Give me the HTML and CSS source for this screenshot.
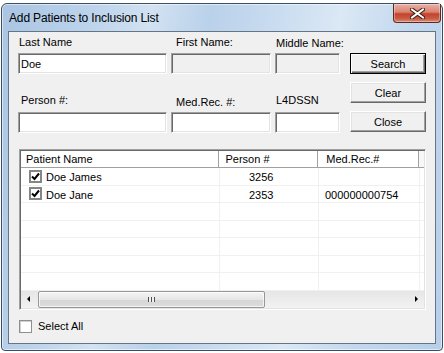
FILE: index.html
```html
<!DOCTYPE html>
<html lang="en">
<head>
    <meta charset="utf-8" />
    <title>Add Patients to Inclusion List</title>
    <link rel="stylesheet" href="styles.css">
</head>
<body>

    <div class="window">
        <div class="titlebar">
            <span class="title">Add Patients to Inclusion List</span>
            <div class="close-btn">
                <svg width="15" height="11" viewBox="0 0 15 11">
                    <path d="M2 1.5 L13 9.5 M13 1.5 L2 9.5" stroke="#3a1a14" stroke-width="4" stroke-linecap="square" />
                    <path d="M2 1.5 L13 9.5 M13 1.5 L2 9.5" stroke="#fff" stroke-width="2" stroke-linecap="square" />
                </svg>
            </div>
        </div>

        <div class="client">
            <div class="top">
                <div class="fields">
                    <label class="lbl">Last Name</label>
                    <label class="lbl lbl-pad">First Name:</label>
                    <label class="lbl lbl-mid">Middle Name:</label>

                    <input class="txt" type="text" value="Doe">
                    <input class="txt" type="text" disabled>
                    <input class="txt" type="text" disabled>

                    <label class="lbl lbl-row2 lbl-person">Person #:</label>
                    <label class="lbl lbl-row2 lbl-pad lbl-low">Med.Rec. #:</label>
                    <label class="lbl lbl-row2 lbl-mid">L4DSSN</label>

                    <input class="txt" type="text">
                    <input class="txt" type="text">
                    <input class="txt" type="text">
                </div>

                <div class="buttons">
                    <button class="btn default">Search</button>
                    <button class="btn">Clear</button>
                    <button class="btn">Close</button>
                </div>
            </div>

            <div class="listview">
                <div class="lv-header">
                    <div class="hcell col-name">Patient Name</div>
                    <div class="hcell col-person">Person #</div>
                    <div class="hcell col-med">Med.Rec.#</div>
                    <div class="hcell col-rest"></div>
                </div>

                <div class="lv-body">
                    <div class="row">
                        <div class="cell col-name"><span class="lv-check"><svg width="9" height="9" viewBox="0 0 9 9"><path d="M1 4.5 L3.5 7 L8 1.5" fill="none" stroke="#000" stroke-width="2" /></svg></span>Doe James</div>
                        <div class="cell col-person num">3256</div>
                        <div class="cell col-med"></div>
                        <div class="cell col-rest"></div>
                    </div>
                    <div class="row">
                        <div class="cell col-name"><span class="lv-check"><svg width="9" height="9" viewBox="0 0 9 9"><path d="M1 4.5 L3.5 7 L8 1.5" fill="none" stroke="#000" stroke-width="2" /></svg></span>Doe Jane</div>
                        <div class="cell col-person num">2353</div>
                        <div class="cell col-med">000000000754</div>
                        <div class="cell col-rest"></div>
                    </div>
                    <div class="row"><div class="cell col-name"></div><div class="cell col-person"></div><div class="cell col-med"></div><div class="cell col-rest"></div></div>
                    <div class="row"><div class="cell col-name"></div><div class="cell col-person"></div><div class="cell col-med"></div><div class="cell col-rest"></div></div>
                    <div class="row"><div class="cell col-name"></div><div class="cell col-person"></div><div class="cell col-med"></div><div class="cell col-rest"></div></div>
                    <div class="row"><div class="cell col-name"></div><div class="cell col-person"></div><div class="cell col-med"></div><div class="cell col-rest"></div></div>
                    <div class="row"><div class="cell col-name"></div><div class="cell col-person"></div><div class="cell col-med"></div><div class="cell col-rest"></div></div>
                </div>

                <div class="hscroll">
                    <div class="arrow left"></div>
                    <div class="track">
                        <div class="thumb"><span class="grip"></span></div>
                    </div>
                    <div class="arrow right"></div>
                </div>
            </div>

            <label class="select-all"><span class="cb"></span>Select All</label>
        </div>
    </div>

</body>
</html>
```

FILE: styles.css
```css
body {
    background: #fff;
    color: #000;
    font: 11px 'Liberation Sans', Arial, sans-serif;
    margin: 0;
    padding: 0;
}

.window {
    box-sizing: border-box;
    width: 442px;
    height: 348px;
    margin: 3px 0 0 1px;
    padding: 0 6px 6px 6px;
    border: 1px solid #3c4e63;
    border-radius: 6px 6px 4px 4px;
    background: linear-gradient(100deg, #a9c5e3 0%, #bcd3eb 18%, #d2e2f2 30%, #b9d1ea 42%, #c9dcf0 55%, #dbe8f5 68%, #c3d8ee 82%, #b7cfe9 100%);
    box-shadow: inset 0 0 0 1px rgba(255, 255, 255, 0.55);
    display: flex;
    flex-direction: column;
}

.titlebar {
    height: 27px;
    display: flex;
    align-items: flex-start;
    justify-content: space-between;
}

    .titlebar .title {
        font: 12px 'Liberation Sans', Arial, sans-serif;
        color: #000;
        margin: 7px 0 0 1px;
        letter-spacing: -0.15px;
    }

.close-btn {
    width: 46px;
    height: 18px;
    margin-right: -5px;
    border: 1px solid #5a2a22;
    border-top: none;
    border-radius: 0 0 4px 4px;
    background: linear-gradient(#eab1a6 0%, #d9836f 45%, #c4432c 55%, #c95a44 80%, #e08a72 100%);
    box-shadow: inset 0 0 0 1px rgba(255, 255, 255, 0.35);
    display: flex;
    align-items: center;
    justify-content: center;
}

.client {
    flex: 1;
    background: #f0f0f0;
    border: 1px solid #657586;
    padding: 0 0 0 9px;
}

.top {
    display: flex;
}

.fields {
    display: grid;
    grid-template-columns: 149px 100px 65px;
    grid-template-rows: 21px 21px 38px 21px;
    column-gap: 4px;
}

.lbl {
    align-self: end;
    margin-bottom: 4px;
    padding-left: 1px;
    line-height: 13px;
    white-space: nowrap;
}

.lbl-pad {
    padding-left: 5px;
}

.lbl-mid {
    padding-left: 1px;
    margin-bottom: 3px;
}

.lbl-row2 {
    margin-bottom: 5px;
}

.lbl-person {
    padding-left: 3px;
}

.lbl-low {
    margin-bottom: 3px;
}

.txt {
    box-sizing: border-box;
    width: 100%;
    height: 21px;
    margin: 0;
    padding: 0 2px;
    font: 11px 'Liberation Sans', Arial, sans-serif;
    color: #000;
    background: #fff;
    border: 1px solid;
    border-color: #a0a0a0 #fff #fff #a0a0a0;
    box-shadow: inset 1px 1px #696969, inset -1px -1px #e3e3e3;
    outline: none;
}

    .txt:disabled {
        background: #f0f0f0;
    }

.buttons {
    display: flex;
    flex-direction: column;
    gap: 8px;
    padding-top: 21px;
    margin-left: 10px;
}

.btn {
    box-sizing: border-box;
    width: 76px;
    height: 21px;
    margin: 0;
    padding: 0;
    font: 11px 'Liberation Sans', Arial, sans-serif;
    color: #000;
    background: #f0f0f0;
    border: 1px solid;
    border-color: #fff #696969 #696969 #fff;
    box-shadow: inset -1px -1px #a0a0a0, inset 1px 1px #e3e3e3;
}

    .btn.default {
        border: 1px solid #000;
        box-shadow: inset 1px 1px #fff, inset -1px -1px #696969, inset -2px -2px #a0a0a0;
    }

.listview {
    box-sizing: border-box;
    width: 407px;
    height: 161px;
    margin: 16px 0 0 1px;
    border: 1px solid;
    border-color: #a0a0a0 #fff #fff #a0a0a0;
    box-shadow: inset 1px 1px #696969, inset -1px -1px #e3e3e3;
    padding: 1px;
    background: #fff;
    display: flex;
    flex-direction: column;
}

.lv-header {
    display: flex;
    height: 16px;
    border-bottom: 1px solid #a0a0a0;
    background: #fff;
}

.hcell {
    box-sizing: border-box;
    line-height: 16px;
    padding-left: 5px;
    border-right: 1px solid #a0a0a0;
    white-space: nowrap;
}

    .hcell.col-person {
        padding-left: 6px;
    }

    .hcell.col-med {
        padding-left: 8px;
    }

    .hcell.col-rest {
        border-right: none;
        background: #f7f7f7;
    }

.col-name {
    width: 199px;
}

.col-person {
    width: 99px;
}

.col-med {
    width: 101px;
}

.col-rest {
    flex: 1;
}

.lv-body {
    flex: 1;
    overflow: hidden;
}

.row {
    display: flex;
    height: 17.5px;
    box-sizing: border-box;
    border-bottom: 1px solid #f0f0f0;
}

.cell {
    box-sizing: border-box;
    border-right: 1px solid #f0f0f0;
    display: flex;
    align-items: center;
    padding-top: 2px;
    white-space: nowrap;
}

    .cell.col-name {
        padding-left: 8px;
    }

    .cell.num {
        padding-left: 29px;
    }

    .cell.col-med {
        padding-left: 6px;
    }

    .cell.col-rest {
        border-right: none;
    }

.lv-check {
    box-sizing: border-box;
    width: 13px;
    height: 13px;
    margin: -2px 4px 0 0;
    border: 2px solid #858585;
    background: #fff;
    display: flex;
    align-items: center;
    justify-content: center;
}

.hscroll {
    height: 17px;
    display: flex;
    background: linear-gradient(#e6e6e6, #f2f2f2);
}

.arrow {
    width: 17px;
    position: relative;
}

    .arrow.left::after,
    .arrow.right::after {
        content: "";
        position: absolute;
        top: 5px;
        width: 0;
        height: 0;
        border-top: 3px solid transparent;
        border-bottom: 3px solid transparent;
    }

    .arrow.left::after {
        left: 6px;
        border-right: 3px solid #000;
    }

    .arrow.right::after {
        left: 8px;
        border-left: 3px solid #000;
    }

.track {
    flex: 1;
}

.thumb {
    box-sizing: border-box;
    width: 227px;
    height: 17px;
    border: 1px solid #979797;
    border-radius: 2px;
    background: linear-gradient(#f4f4f4 0%, #e6e6e6 50%, #d6d6d6 51%, #dcdcdc 100%);
    box-shadow: inset 0 0 0 1px rgba(255, 255, 255, 0.7);
    display: flex;
    align-items: center;
    justify-content: center;
}

.grip {
    width: 7px;
    height: 5px;
    background: repeating-linear-gradient(90deg, #505050 0, #505050 1px, #f0f0f0 1px, #f0f0f0 3px);
}

.select-all {
    display: flex;
    align-items: center;
    margin: 10px 0 0 1px;
    line-height: 13px;
}

.cb {
    box-sizing: border-box;
    width: 13px;
    height: 13px;
    margin-right: 6px;
    border: 1px solid #8e8f8f;
    background: #fff;
    box-shadow: inset 1px 1px #d0d0d0;
}
```
